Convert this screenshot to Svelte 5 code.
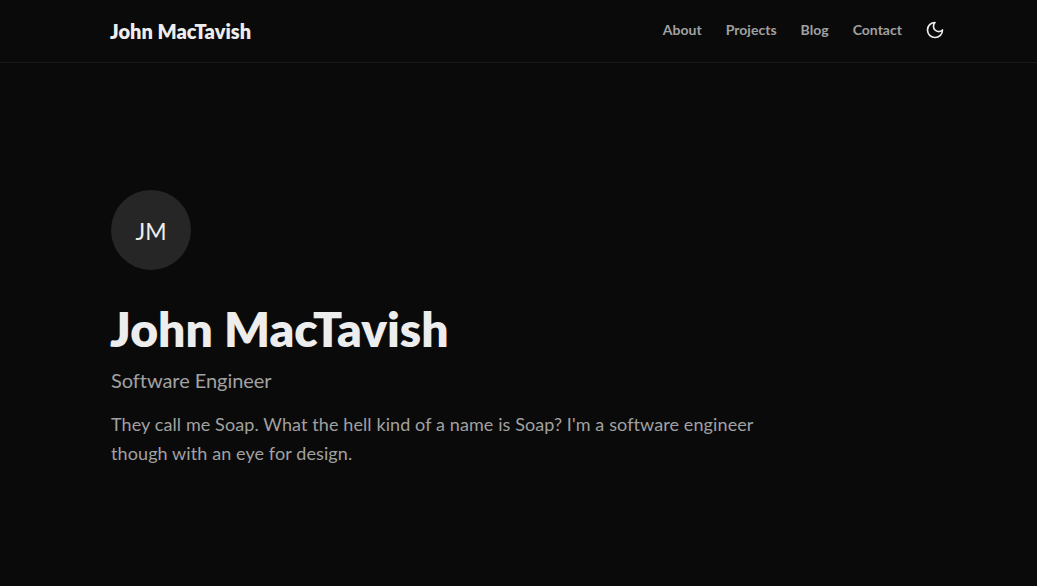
<script lang="ts">
  const links = ["About", "Projects", "Blog", "Contact"];
</script>

<div class="page">
  <header class="topbar">
    <div class="inner">
      <a class="brand" href="#top">John MacTavish</a>
      <nav>
        {#each links as link}
          <a href="#top">{link}</a>
        {/each}
        <button class="theme" aria-label="Toggle theme">
          <svg viewBox="0 0 24 24" width="20" height="20" fill="none" stroke="currentColor" stroke-width="2" stroke-linecap="round" stroke-linejoin="round">
            <path d="M12 3a6 6 0 0 0 9 9 9 9 0 1 1-9-9Z" />
          </svg>
        </button>
      </nav>
    </div>
  </header>

  <main>
    <div class="avatar">JM</div>
    <h1>John MacTavish</h1>
    <p class="role">Software Engineer</p>
    <p class="bio">They call me Soap. What the hell kind of a name is Soap? I'm a software engineer though with an eye for design.</p>
  </main>
</div>

<style>
  :global(body) {
    background: #0a0a0a;
  }

  .page {
    min-height: 586px;
    background: #0a0a0a;
    font-family: "Lato", "Open Sans", sans-serif;
    color: #ededed;
  }

  .topbar {
    height: 62px;
    border-bottom: 1px solid #1a1a1a;
  }

  .inner {
    height: 60px;
    margin-left: 110px;
    width: 835px;
    display: flex;
    align-items: center;
    justify-content: space-between;
  }

  .brand {
    margin-top: 2px;
    font-size: 20px;
    font-weight: 800;
    color: #ededed;
    text-decoration: none;
  }

  nav {
    display: flex;
    align-items: center;
    gap: 24px;
  }

  nav a {
    margin-bottom: 2px;
    font-size: 14px;
    font-weight: 700;
    letter-spacing: 0.02px;
    color: #a1a1a1;
    text-decoration: none;
  }

  .theme {
    display: flex;
    margin-left: -1px;
    padding: 0;
    background: none;
    border: none;
    color: #ededed;
  }

  main {
    padding: 127px 0 0 110px;
  }

  .avatar {
    box-sizing: border-box;
    width: 80px;
    height: 80px;
    margin-left: 1px;
    padding-top: 2px;
    border-radius: 50%;
    background: #262626;
    display: flex;
    align-items: center;
    justify-content: center;
    font-size: 23px;
  }

  h1 {
    margin: 30px 0 0;
    font-size: 48px;
    line-height: 58px;
    font-weight: 800;
  }

  .role {
    margin: 8px 0 0 1px;
    font-size: 20px;
    line-height: 28px;
    letter-spacing: -0.05px;
    color: #a1a1a1;
  }

  .bio {
    margin: 16px 0 0 1px;
    max-width: 672px;
    font-size: 18px;
    line-height: 29px;
    letter-spacing: 0.1px;
    color: #a1a1a1;
  }
</style>
